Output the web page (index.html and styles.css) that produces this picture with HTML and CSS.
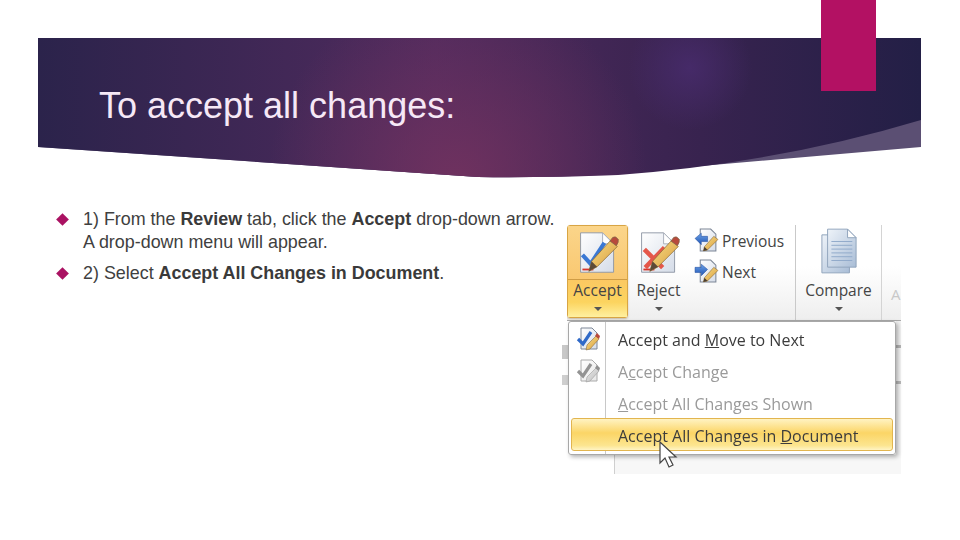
FILE: index.html
```
<!DOCTYPE html>
<html>

<head>
	<meta charset="utf-8">
	<title>To accept all changes</title>
	<link rel="stylesheet" href="styles.css">
</head>

<body>
	<svg class="icon-defs" xmlns="http://www.w3.org/2000/svg">
		<defs>
			<linearGradient id="pageGradient" x1="0" y1="0" x2="1" y2="1">
				<stop offset="0%" stop-color="#ffffff" />
				<stop offset="100%" stop-color="#d5dce8" />
			</linearGradient>
			<linearGradient id="pencilGradient" x1="0" y1="0" x2="1" y2="1">
				<stop offset="0%" stop-color="#f7e08a" />
				<stop offset="100%" stop-color="#d99a3a" />
			</linearGradient>
			<linearGradient id="arrowGradient" x1="0" y1="0" x2="0" y2="1">
				<stop offset="0%" stop-color="#6da2e6" />
				<stop offset="100%" stop-color="#1f55b5" />
			</linearGradient>
			<linearGradient id="sheetGradient" x1="0" y1="0" x2="1" y2="1">
				<stop offset="0%" stop-color="#eef3f9" />
				<stop offset="100%" stop-color="#a9bdd6" />
			</linearGradient>
		</defs>
		<symbol id="page" viewBox="0 0 48 48">
			<path d="M5 2 H29 L41 14 V45 H5 Z" fill="url(#pageGradient)" stroke="#8d95a3" />
			<path d="M29 2 V14 H41 Z" fill="#ffffff" stroke="#a5acb8" />
		</symbol>
		<symbol id="pencil" viewBox="0 0 48 48">
			<path d="M14 44 L17 33 L38 10 L45 17 L23 39 Z" fill="url(#pencilGradient)" stroke="#8a6a34" stroke-width="0.8" />
			<path d="M14 44 L17 33 L23 39 Z" fill="#5c4a38" />
			<path d="M37 11 L40 7 Q43 5 46 9 Q47 12 44 16 Z" fill="#b84a3c" stroke="#7d6a4a" stroke-width="0.8" />
		</symbol>
		<symbol id="small-nav" viewBox="0 0 24 24">
			<path d="M6 1 H16 L21 6 V22 H6 Z" fill="url(#pageGradient)" stroke="#7c8696" />
			<path d="M9 22 L10 18 L19 8 L23 11 L13 21 Z" fill="url(#pencilGradient)" stroke="#7a5c30" stroke-width="0.5" />
			<path d="M9 22 L10 18 L13 21 Z" fill="#4a3d30" />
		</symbol>
		<symbol id="small-check" viewBox="0 0 24 24">
			<path d="M5 1 H16 L21 6 V22 H5 Z" fill="url(#pageGradient)" stroke="#7c8696" />
			<path d="M2 12 L7 17 L15 5" fill="none" stroke="#2f69c8" stroke-width="3.2" />
			<path d="M10 23 L11 18 L20 9 L23 12 L14 22 Z" fill="url(#pencilGradient)" stroke="#7a5c30" stroke-width="0.5" />
			<path d="M19 9 L21 6 L24 9 L23 12 Z" fill="#b84a3c" />
		</symbol>
	</svg>

	<div class="slide">
		<div class="ribbon-tag"></div>

		<header class="banner">
			<svg class="banner-shape" xmlns="http://www.w3.org/2000/svg" viewBox="0 0 883 140">
				<defs>
					<linearGradient id="bannerBase" x1="0" y1="0" x2="1" y2="0">
						<stop offset="0%" stop-color="#2b234b" />
						<stop offset="45%" stop-color="#502b5e" />
						<stop offset="75%" stop-color="#38234f" />
						<stop offset="100%" stop-color="#231f46" />
					</linearGradient>
					<radialGradient id="bannerGlow" gradientUnits="userSpaceOnUse" cx="420" cy="140" r="190">
						<stop offset="0%" stop-color="#72325f" stop-opacity="0.9" />
						<stop offset="100%" stop-color="#72325f" stop-opacity="0" />
					</radialGradient>
					<radialGradient id="bannerSpot" gradientUnits="userSpaceOnUse" cx="652" cy="30" r="62">
						<stop offset="0%" stop-color="#472b6b" stop-opacity="0.9" />
						<stop offset="100%" stop-color="#472b6b" stop-opacity="0" />
					</radialGradient>
				</defs>
				<path d="M0 0 H883 V109 L560 137 Q500 140 440 139 L0 109 Z" fill="#5b4f73" />
				<path d="M0 0 H883 V82 Q740 125 580 137 Q500 140 440 139 L0 109 Z" fill="url(#bannerBase)" />
				<path d="M0 0 H883 V82 Q740 125 580 137 Q500 140 440 139 L0 109 Z" fill="url(#bannerGlow)" />
				<path d="M0 0 H883 V82 Q740 125 580 137 Q500 140 440 139 L0 109 Z" fill="url(#bannerSpot)" />
			</svg>
			<h1 class="title">To accept all changes:</h1>
		</header>

		<main class="content">
			<ul class="points">
				<li class="point">
					<span class="bullet"></span>
					<p>1) From the <b>Review</b> tab, click the <b>Accept</b> drop-down arrow. A drop-down menu will appear.</p>
				</li>
				<li class="point">
					<span class="bullet"></span>
					<p>2) Select <b>Accept All Changes in Document</b>.</p>
				</li>
			</ul>

			<div class="shot">
				<div class="word-ribbon">
					<div class="big-btn big-btn-active">
						<div class="big-btn-top">
							<svg class="big-icon" viewBox="0 0 48 48">
								<use href="#page" />
								<path d="M7 42 H19" stroke="#d8352b" stroke-width="2" />
								<path d="M7 26 L16 36 L31 13" fill="none" stroke="#3a78d4" stroke-width="4.5" />
								<use href="#pencil" />
							</svg>
						</div>
						<div class="big-btn-label">
							<span>Accept</span>
							<i class="caret"></i>
						</div>
					</div>
					<div class="big-btn">
						<div class="big-btn-top">
							<svg class="big-icon" viewBox="0 0 48 48">
								<use href="#page" />
								<path d="M7 42 H19" stroke="#d8352b" stroke-width="2" />
								<path d="M8 20 L28 40 M30 18 L9 40" fill="none" stroke="#e4574a" stroke-width="5" />
								<use href="#pencil" />
							</svg>
						</div>
						<div class="big-btn-label">
							<span>Reject</span>
							<i class="caret"></i>
						</div>
					</div>
					<div class="nav-stack">
						<div class="nav-item">
							<svg class="nav-icon" viewBox="0 0 24 24">
								<use href="#small-nav" />
								<path d="M1 10 L7 5 V8 H13 V13 H7 V16 Z" fill="url(#arrowGradient)" stroke="#1d4a9c" stroke-width="0.5" />
							</svg>
							<span>Previous</span>
						</div>
						<div class="nav-item">
							<svg class="nav-icon" viewBox="0 0 24 24">
								<use href="#small-nav" />
								<path d="M13 10 L7 5 V8 H1 V13 H7 V16 Z" fill="url(#arrowGradient)" stroke="#1d4a9c" stroke-width="0.5" />
							</svg>
							<span>Next</span>
						</div>
					</div>
					<div class="big-btn compare-btn">
						<div class="big-btn-top">
							<svg class="compare-icon" viewBox="0 0 40 48">
								<path d="M2 7 H24 L31 14 V47 H2 Z" fill="url(#sheetGradient)" stroke="#8ea2bb" />
								<path d="M8 1 H29 L38 10 V41 H8 Z" fill="url(#sheetGradient)" stroke="#8ea2bb" />
								<path d="M29 1 V10 H38 Z" fill="#ffffff" stroke="#8ea2bb" />
								<path d="M12 14 H34 M12 18 H34 M12 22 H34 M12 26 H34 M12 30 H34 M12 34 H34" stroke="#8fa9c9" />
							</svg>
						</div>
						<div class="big-btn-label">
							<span>Compare</span>
							<i class="caret"></i>
						</div>
					</div>
					<div class="faded-group">A</div>
				</div>

				<div class="menu-row">
					<div class="edge edge-left"></div>
					<div class="menu">
						<div class="menu-item">
							<svg class="menu-icon" viewBox="0 0 24 24"><use href="#small-check" /></svg>
							<span class="menu-text">Accept and <u>M</u>ove to Next</span>
						</div>
						<div class="menu-item menu-item-off">
							<svg class="menu-icon" viewBox="0 0 24 24"><use href="#small-check" /></svg>
							<span class="menu-text">A<u>c</u>cept Change</span>
						</div>
						<div class="menu-item menu-item-off">
							<span class="menu-icon"></span>
							<span class="menu-text"><u>A</u>ccept All Changes Shown</span>
						</div>
						<div class="menu-item menu-item-hot">
							<span class="menu-icon"></span>
							<span class="menu-text">Accept All Changes in <u>D</u>ocument</span>
						</div>
					</div>
					<div class="edge edge-right"></div>
					<svg class="cursor" viewBox="0 0 20 28">
						<path d="M2 1 V22 L7 17 L11 26 L15 24 L11 16 L18 16 Z" fill="#ffffff" stroke="#444444" stroke-width="1.2" />
					</svg>
				</div>
				<div class="page-strip"></div>
			</div>
		</main>
	</div>
</body>

</html>
```

FILE: styles.css
```
body {
	margin: 0;
	background-color: white;
}

.icon-defs {
	position: absolute;
	width: 0;
	height: 0;
}

.slide {
	position: relative;
	width: 960px;
	height: 540px;
	overflow: hidden;
	padding-top: 38px;
	box-sizing: border-box;
	font-family: "Liberation Sans", Arial, sans-serif;
}

.ribbon-tag {
	position: absolute;
	top: 0;
	left: 821px;
	width: 55px;
	height: 91px;
	background-color: #b31163;
	z-index: 2;
}

/* banner */
.banner {
	position: relative;
	width: 883px;
	height: 140px;
	margin-left: 38px;
}

.banner-shape {
	position: absolute;
	top: 0;
	left: 0;
	width: 100%;
	height: 100%;
}

.title {
	position: relative;
	margin: 0;
	padding: 47px 0 0 61px;
	font-size: 36px;
	line-height: 42px;
	font-weight: normal;
	color: #f6e8f6;
}

/* text + picture */
.content {
	display: flex;
	padding-top: 30px;
}

.points {
	width: 505px;
	margin: 0;
	padding: 0 0 0 57px;
	list-style: none;
}

.point {
	display: flex;
	margin-bottom: 8px;
	font-size: 17.9px;
	line-height: 23px;
	color: #404040;
}

.point p {
	margin: 0;
	flex: 1;
}

.point b {
	color: #3a3a3a;
}

.bullet {
	flex: none;
	width: 9px;
	height: 9px;
	margin: 7px 16px 0 1px;
	background-color: #aa1262;
	transform: rotate(45deg);
}

/* word screenshot */
.shot {
	width: 339px;
	margin-top: 14px;
	font-family: "Open Sans", "Noto Sans", sans-serif;
	color: #444444;
	filter: blur(0.35px);
}

.word-ribbon {
	display: flex;
	height: 99px;
	margin-left: 5px;
	padding-top: 3px;
	box-sizing: border-box;
	background: linear-gradient(#ffffff 45%, #eeeeee);
	border-bottom: 1px solid #a9a9a9;
	overflow: hidden;
}

.big-btn {
	display: flex;
	flex-direction: column;
	flex: none;
	width: 61px;
	height: 93px;
	box-sizing: border-box;
	border: 1px solid transparent;
	border-radius: 3px;
	text-align: center;
}

.big-btn-active {
	border-color: #d8a544;
	box-shadow: 0 1px 2px rgba(120, 90, 30, 0.35);
}

.big-btn-top {
	display: flex;
	justify-content: center;
	height: 54px;
	padding-top: 5px;
	box-sizing: border-box;
}

.big-btn-active .big-btn-top {
	background: linear-gradient(#fbd58a, #f9c871);
	border-bottom: 1px solid #cf9c45;
}

.big-btn-label {
	display: flex;
	flex-direction: column;
	align-items: center;
	flex: 1;
	font-size: 15.5px;
	line-height: 20px;
}

.big-btn-active .big-btn-label {
	background: linear-gradient(#fbc862, #fcd45f 60%, #fff0a0);
}

.caret {
	width: 0;
	height: 0;
	margin-top: 7px;
	border-left: 4px solid transparent;
	border-right: 4px solid transparent;
	border-top: 4px solid #555555;
}

.big-icon {
	width: 44px;
	height: 44px;
}

.nav-stack {
	display: flex;
	flex-direction: column;
	flex: none;
	width: 106px;
	padding: 3px 0 0 5px;
	box-sizing: border-box;
	gap: 6px;
}

.nav-item {
	display: flex;
	align-items: center;
	gap: 3px;
	height: 25px;
	font-size: 15.5px;
}

.nav-icon {
	width: 25px;
	height: 25px;
	flex: none;
}

.compare-btn {
	width: 87px;
	height: 96px;
	border: 0;
	border-left: 1px solid #c9c9c9;
	border-right: 1px solid #d4d4d4;
	border-radius: 0;
	padding-top: 1px;
}

.compare-btn .big-btn-top {
	height: 54px;
	padding-top: 2px;
}

.compare-icon {
	width: 38px;
	height: 46px;
}

.faded-group {
	padding: 59px 0 0 9px;
	font-size: 15px;
	color: #c8c8c8;
}

/* drop-down menu */
.menu-row {
	position: relative;
	display: flex;
	height: 134px;
}

.edge {
	flex: none;
	width: 6px;
}

.edge-left {
	background: linear-gradient(transparent 24px, #c8c8c8 24px, #c8c8c8 38px, transparent 38px, transparent 54px, #cfcfcf 54px, #cfcfcf 64px, transparent 64px);
}

.edge-right {
	width: 5px;
	background: linear-gradient(#f2f2f2 24px, #b5b5b5 24px, #b5b5b5 27px, #f4f4f4 27px, #f4f4f4 60px, #b9b9b9 60px, #b9b9b9 63px, #f6f6f6 63px);
}

.menu {
	position: relative;
	width: 328px;
	box-sizing: border-box;
	padding: 1px;
	background: linear-gradient(90deg, white 36px, #c8c8c8 36px, #c8c8c8 37px, white 37px);
	border: 1px solid #a8a8a8;
	border-radius: 3px;
	box-shadow: 2px 2px 4px rgba(0, 0, 0, 0.3);
	z-index: 1;
}

.menu-item {
	display: flex;
	align-items: center;
	height: 32px;
	font-size: 16px;
	color: #3c3c3c;
}

.menu-text {
	padding-top: 1px;
}

.menu-item u {
	text-decoration-thickness: 1px;
}

.menu-item-off {
	color: #9a9a9a;
}

.menu-item-off .menu-icon {
	filter: grayscale(1) opacity(0.7);
}

.menu-item-hot {
	height: 33px;
	margin: -1px 1px 0 1px;
	padding-top: 1px;
	border: 1px solid #e2b54f;
	border-radius: 3px;
	box-sizing: border-box;
	background: linear-gradient(#fff3c2, #fbd566 45%, #fce58f 85%, #fff4c4);
}

.menu-icon {
	flex: none;
	width: 24px;
	height: 24px;
	margin: 0 18px 0 6px;
}

.menu-item-hot .menu-icon {
	margin-left: 5px;
	margin-right: 17px;
}

.cursor {
	position: absolute;
	top: 120px;
	left: 96px;
	width: 20px;
	height: 28px;
	z-index: 2;
}

.page-strip {
	width: 286px;
	height: 19px;
	margin-left: 52px;
	background-color: #f7f7f7;
	border-left: 1px solid #cfcfcf;
}
```
